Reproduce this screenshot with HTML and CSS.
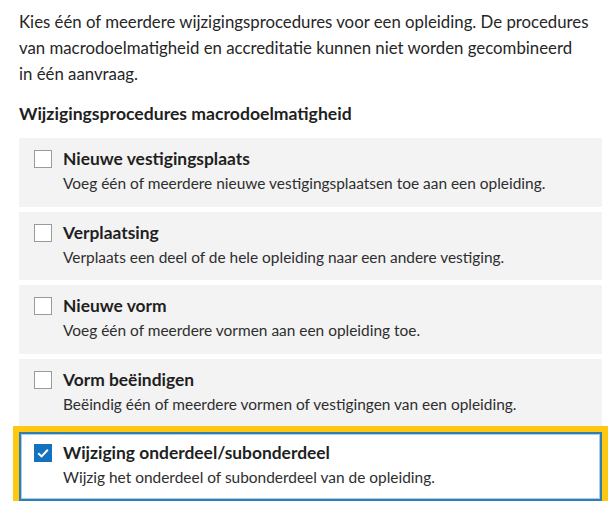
FILE: index.html
```html
<!DOCTYPE html>
<html lang="nl">
<head>
<meta charset="utf-8">
<title>Wijzigingsprocedures</title>
<link rel="stylesheet" href="styles.css">
</head>
<body>
<main class="page">
  <p class="intro">Kies één of meerdere wijzigingsprocedures voor een opleiding. De procedures van macrodoelmatigheid en accreditatie kunnen niet worden gecombineerd in&nbsp;één aanvraag.</p>
  <h2 class="group-title">Wijzigingsprocedures macrodoelmatigheid</h2>
  <ul class="options">
    <li class="option">
      <span class="box"></span>
      <div class="text">
        <div class="title">Nieuwe vestigingsplaats</div>
        <div class="desc">Voeg één of meerdere nieuwe vestigingsplaatsen toe aan een opleiding.</div>
      </div>
    </li>
    <li class="option">
      <span class="box"></span>
      <div class="text">
        <div class="title">Verplaatsing</div>
        <div class="desc">Verplaats een deel of de hele opleiding naar een andere vestiging.</div>
      </div>
    </li>
    <li class="option">
      <span class="box"></span>
      <div class="text">
        <div class="title">Nieuwe vorm</div>
        <div class="desc">Voeg één of meerdere vormen aan een opleiding toe.</div>
      </div>
    </li>
    <li class="option">
      <span class="box"></span>
      <div class="text">
        <div class="title">Vorm beëindigen</div>
        <div class="desc">Beëindig één of meerdere vormen of vestigingen van een opleiding.</div>
      </div>
    </li>
    <li class="option selected">
      <span class="box checked"><svg viewBox="0 0 18 18" width="18" height="18"><path d="M4.2 9.2 L7.6 12.4 L13.8 5.8" fill="none" stroke="#ffffff" stroke-width="2"/></svg></span>
      <div class="text">
        <div class="title">Wijziging onderdeel/subonderdeel</div>
        <div class="desc">Wijzig het onderdeel of subonderdeel van de opleiding.</div>
      </div>
    </li>
  </ul>
</main>
</body>
</html>
```

FILE: styles.css
```css
* { box-sizing: border-box; }
html, body { margin: 0; padding: 0; background: #ffffff; }
body {
  font-family: Lato, "Liberation Sans", sans-serif;
  color: #222222;
}
.page {
  padding: 9px 14px 0 19px;
}
.intro {
  margin: 0;
  font-size: 16.8px;
  line-height: 26px;
  color: #262626;
}
.group-title {
  margin: 15px 0 12px;
  font-size: 17.6px;
  line-height: 24px;
  font-weight: 700;
  color: #1f1f1f;
}
.options {
  list-style: none;
  margin: 0;
  padding: 0;
  display: flex;
  flex-direction: column;
  gap: 5px;
}
.option {
  display: flex;
  align-items: flex-start;
  gap: 11px;
  background: #f3f3f3;
  padding: 8px 12px 12px 15px;
  min-height: 68.5px;
}
.box {
  flex: none;
  width: 18px;
  height: 18px;
  margin-top: 4px;
  background: #ffffff;
  border: 1px solid #9a9a9a;
  display: block;
}
.box.checked {
  background: #1471c0;
  border-color: #1471c0;
  position: relative;
}
.box.checked svg {
  position: absolute;
  left: -1px;
  top: -1px;
}
.title {
  font-size: 17.4px;
  font-weight: 700;
  line-height: 26px;
  color: #1f1f1f;
}
.desc {
  font-size: 15.45px;
  line-height: 22.5px;
  color: #2e2e2e;
}
.option.selected {
  background: #ffffff;
  border: 2px solid #2f7fb3;
  box-shadow: inset 0 0 0 1px #a9cde6;
  outline: 6px solid #fdc80f;
  outline-offset: 0;
  padding: 6px 10px 10px 13px;
}
```
